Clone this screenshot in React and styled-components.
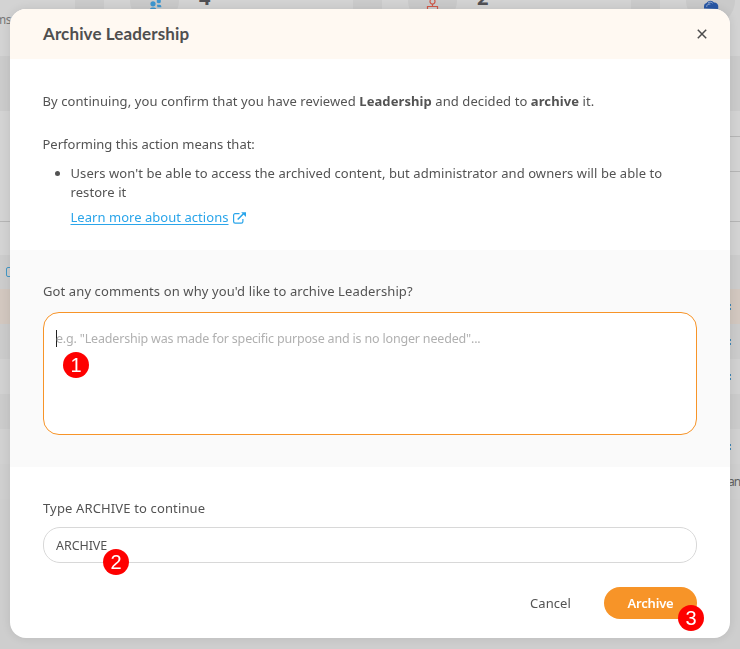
import React from 'react';
import styled, { createGlobalStyle } from 'styled-components';

const GlobalStyle = createGlobalStyle`
  * { box-sizing: border-box; }
  body {
    margin: 0;
    overflow: hidden;
    background: #cfcfcf;
    color: #535353;
    font: 13px/19px "Noto Sans", "Open Sans", sans-serif;
  }
  p, ul, h1 { margin: 0; }
`;

/* Dashboard behind the dialog */
const Dashboard = styled.div`
  height: 649px;
  overflow: hidden;
  background: #cecece;
`;

const StatRow = styled.div`
  display: grid;
  grid-template-columns: 75px 249px 249px 80px;
  column-gap: 29px;
  height: 111px;
  padding-bottom: 55px;
  background: #cbcbcb;
`;

const StatCard = styled.div`
  display: flex;
  align-items: flex-start;
  gap: 20px;
  padding-left: ${({ $inset }) => $inset}px;
  overflow: hidden;
  background: #d3d3d3;
`;

const StatIcon = styled.div`
  display: flex;
  flex: none;
  justify-content: center;
  width: 49px;
  height: 49px;
  margin-top: -24px;
  padding-top: 24px;
  border-radius: 50%;
  background: #cacaca;

  svg { flex: none; }
`;

const StatValue = styled.strong`
  margin-top: -12px;
  color: #505054;
  font-size: 20px;
  line-height: 20px;
`;

const StatLabel = styled.span`
  margin-top: 10px;
  color: #777777;
  font-size: 12px;
  letter-spacing: -0.5px;
  margin-left: -5px;
`;

const EdgeRow = styled.div`
  display: flex;
  align-items: center;
  justify-content: space-between;
  height: ${({ $h }) => $h}px;
  overflow: hidden;
  background: ${({ $bg = '#d3d3d3' }) => $bg};
  border-bottom: ${({ $line }) => ($line ? '1px solid #b5b5b5' : '0')};
`;

const PanelRow = styled(EdgeRow)`
  margin-left: 12px;
`;

const Panel = styled.div`
  background: #d3d3d3;
`;

const CheckBox = styled.span`
  width: 10px;
  height: 10px;
  margin-left: 6px;
  border: 1px solid #4397c5;
  border-radius: 2px;
`;

const LinkMark = styled.span`
  width: 1px;
  height: 6px;
  margin-left: auto;
  margin-right: 9px;
  border: solid #3f86b5;
  border-width: 2px 0;
`;

const EdgeText = styled.span`
  width: 12px;
  margin-left: auto;
  color: #626262;
  font-size: 12px;
  letter-spacing: -0.9px;
  white-space: nowrap;
`;

/* Dialog */
const Overlay = styled.div`
  position: fixed;
  inset: 0;
  padding: 9px 10px 11px;
`;

const Dialog = styled.section`
  display: flex;
  flex-direction: column;
  height: 629px;
  overflow: hidden;
  border-radius: 16px;
  background: #ffffff;
  box-shadow: 0 0 10px rgba(0, 0, 0, 0.1);
`;

const Header = styled.header`
  display: flex;
  flex: none;
  align-items: center;
  justify-content: space-between;
  height: 50px;
  padding: 0 23px 0 33px;
  background: #fff9f2;
`;

const Title = styled.h1`
  font: 700 17px/24px Lato, sans-serif;
  letter-spacing: 0.12px;
  color: #4f4f4f;
`;

const CloseButton = styled.button`
  display: flex;
  padding: 0;
  border: 0;
  background: none;
`;

const Summary = styled.div`
  flex: none;
  height: 191px;
  padding: 33px 33px 0 32.5px;
`;

const Copy = styled.p`
  margin-bottom: ${({ $gap = 0 }) => $gap}px;
  letter-spacing: ${({ $track = 0 }) => $track}px;
  white-space: nowrap;
`;

const Effects = styled.ul`
  padding-left: 28px;
  letter-spacing: 0.075px;
`;

const HelpLink = styled.a`
  display: inline-flex;
  align-items: center;
  gap: 4px;
  margin: 6px 0 0 28px;
  color: #2aa5ea;
  letter-spacing: 0.04px;

  span { text-decoration: underline; text-underline-offset: 2px; }
`;

const Comments = styled.div`
  flex: none;
  height: 217px;
  padding: 32px 33px 0;
  background: #fafafa;
`;

const CommentBox = styled.div`
  height: 123px;
  margin-top: 11px;
  padding: 16px 12px;
  border: 1px solid #f79428;
  border-radius: 16px;
  background: #ffffff;
  color: #b0b0b0;
  font-size: 12.5px;
  letter-spacing: -0.18px;
  white-space: nowrap;
`;

const Caret = styled.i`
  display: inline-block;
  width: 1px;
  height: 17px;
  margin-right: -1px;
  background: #222222;
  vertical-align: -4px;
`;

const Confirm = styled.div`
  padding: 32px 33px 0;
`;

const ConfirmInput = styled.div`
  display: flex;
  align-items: center;
  height: 36px;
  margin-top: 9px;
  padding: 1px 12px 0;
  border: 1px solid #d8d8d8;
  border-radius: 17px;
  font-size: 12.5px;
  letter-spacing: -0.06px;
`;

const Actions = styled.div`
  display: flex;
  align-items: center;
  justify-content: flex-end;
  gap: 33px;
  margin-top: 24px;
`;

const Button = styled.button`
  height: 32px;
  width: ${({ $primary }) => ($primary ? '93px' : '41px')};
  padding: 0;
  border: 0;
  border-radius: 16px;
  background: ${({ $primary }) => ($primary ? '#f79428' : 'none')};
  color: ${({ $primary }) => ($primary ? '#ffffff' : '#535353')};
  font: ${({ $primary }) => ($primary ? 600 : 400)} 13px/32px "Noto Sans", sans-serif;
  letter-spacing: ${({ $primary }) => ($primary ? '-0.2px' : '0.08px')};
`;

const StepBadge = styled.span`
  position: absolute;
  left: ${({ $x }) => $x}px;
  top: ${({ $y }) => $y}px;
  width: 26px;
  height: 26px;
  border-radius: 50%;
  background: #fe0000;
  color: #ffffff;
  font: 20px/26px "Liberation Sans", sans-serif;
  text-align: center;
`;

const UsersIcon = () => (
  <svg width="16" height="14" viewBox="0 0 16 14" fill="#3c96cf">
    <circle cx="6" cy="3.8" r="2.6" />
    <path d="M2.8 10c0-1.8 1-2.6 2.2-2.6h2.2c1.4 0 2.2.8 2.2 2.6v3H2.8z" />
    <path d="M9.8 0h4v2.3c-.6 1.1-2.5 1.4-4 .2zM10 4.8h2.4c1.4 0 2 .8 2 2.5h-4z" />
  </svg>
);

const NodeIcon = () => (
  <svg width="14" height="14" viewBox="0 0 14 14" fill="none" stroke="#cf5848" strokeWidth="1.2">
    <circle cx="6.5" cy="1.5" r="2.5" />
    <path d="M6.5 4v2.5M1.5 10V6.5h10V10" />
  </svg>
);

const CloudIcon = () => (
  <svg width="16" height="14" viewBox="0 0 16 14">
    <path d="M1 8.5V6a3 3 0 0 1 2.5-3A4.5 4.5 0 0 1 11 2.4 4 4 0 0 1 15.2 7v2z" fill="#2857a5" />
    <path d="M3.7 6.8c0-2.4 2-3.2 3.6-2.6M5 3c1.3-1.2 3.5-1 4.6.2" fill="none" stroke="#b9c5da" strokeWidth=".8" />
  </svg>
);

const CloseIcon = () => (
  <svg width="10" height="10" viewBox="0 0 10 10" fill="none" stroke="#4c4c4c" strokeWidth="1.5">
    <path d="m.8.8 8.4 8.4M9.2.8.8 9.2" />
  </svg>
);

const ExternalIcon = () => (
  <svg width="13" height="12" viewBox="0 0 13 12" fill="none" stroke="#2aa5ea" strokeWidth="1.2">
    <path d="M6.5 1.6H2.2A1.6 1.6 0 0 0 .6 3.2v6.3a1.6 1.6 0 0 0 1.6 1.6h6.1a1.6 1.6 0 0 0 1.6-1.6V7" />
    <path d="m4.7 7.5 6-6" strokeWidth="1.6" />
    <path d="M8.2.3H13v4.8z" fill="#2aa5ea" stroke="none" />
  </svg>
);

export default function App() {
  return (
    <>
      <GlobalStyle />
      <Dashboard>
        <StatRow>
          <StatCard $inset={0}>
            <StatLabel>ms</StatLabel>
          </StatCard>
          <StatCard $inset={26}>
            <StatIcon><UsersIcon /></StatIcon>
            <StatValue>4</StatValue>
          </StatCard>
          <StatCard $inset={26}>
            <StatIcon><NodeIcon /></StatIcon>
            <StatValue>2</StatValue>
          </StatCard>
          <StatCard $inset={26}>
            <StatIcon><CloudIcon /></StatIcon>
          </StatCard>
        </StatRow>
        <Panel>
          <PanelRow $h={26} $line />
          <PanelRow $h={35} $line />
        </Panel>
        <EdgeRow $h={50} $line />
        <EdgeRow $h={33} />
        <EdgeRow $h={34} $bg="#cccccc"><CheckBox /></EdgeRow>
        <EdgeRow $h={35} $bg="#d2c7bf"><LinkMark /></EdgeRow>
        <EdgeRow $h={35} $bg="#cbcbcb"><LinkMark /></EdgeRow>
        <EdgeRow $h={35} $bg="#d1d1d1"><LinkMark /></EdgeRow>
        <EdgeRow $h={35} $bg="#cbcbcb" />
        <EdgeRow $h={35} $bg="#d1d1d1"><LinkMark /></EdgeRow>
        <EdgeRow $h={35} $bg="#cfcfcf"><EdgeText>an</EdgeText></EdgeRow>
      </Dashboard>

      <Overlay>
        <Dialog role="dialog" aria-label="Archive Leadership">
          <Header>
            <Title>Archive Leadership</Title>
            <CloseButton aria-label="Close"><CloseIcon /></CloseButton>
          </Header>
          <Summary>
            <Copy $gap={24} $track={0.085}>
              By continuing, you confirm that you have reviewed <b>Leadership</b> and decided to <b>archive</b> it.
            </Copy>
            <Copy $gap={10}>Performing this action means that:</Copy>
            <Effects>
              <li>Users won't be able to access the archived content, but administrator and owners will be able to restore it</li>
            </Effects>
            <HelpLink>
              <span>Learn more about actions</span>
              <ExternalIcon />
            </HelpLink>
          </Summary>
          <Comments>
            <Copy $track={0.11}>Got any comments on why you'd like to archive Leadership?</Copy>
            <CommentBox><Caret />e.g. "Leadership was made for specific purpose and is no longer needed"...</CommentBox>
          </Comments>
          <Confirm>
            <Copy $track={0.14}>Type ARCHIVE to continue</Copy>
            <ConfirmInput>ARCHIVE</ConfirmInput>
            <Actions>
              <Button>Cancel</Button>
              <Button $primary>Archive</Button>
            </Actions>
          </Confirm>
        </Dialog>
        <StepBadge $x={63} $y={352}>1</StepBadge>
        <StepBadge $x={103} $y={549}>2</StepBadge>
        <StepBadge $x={678} $y={605}>3</StepBadge>
      </Overlay>
    </>
  );
}
